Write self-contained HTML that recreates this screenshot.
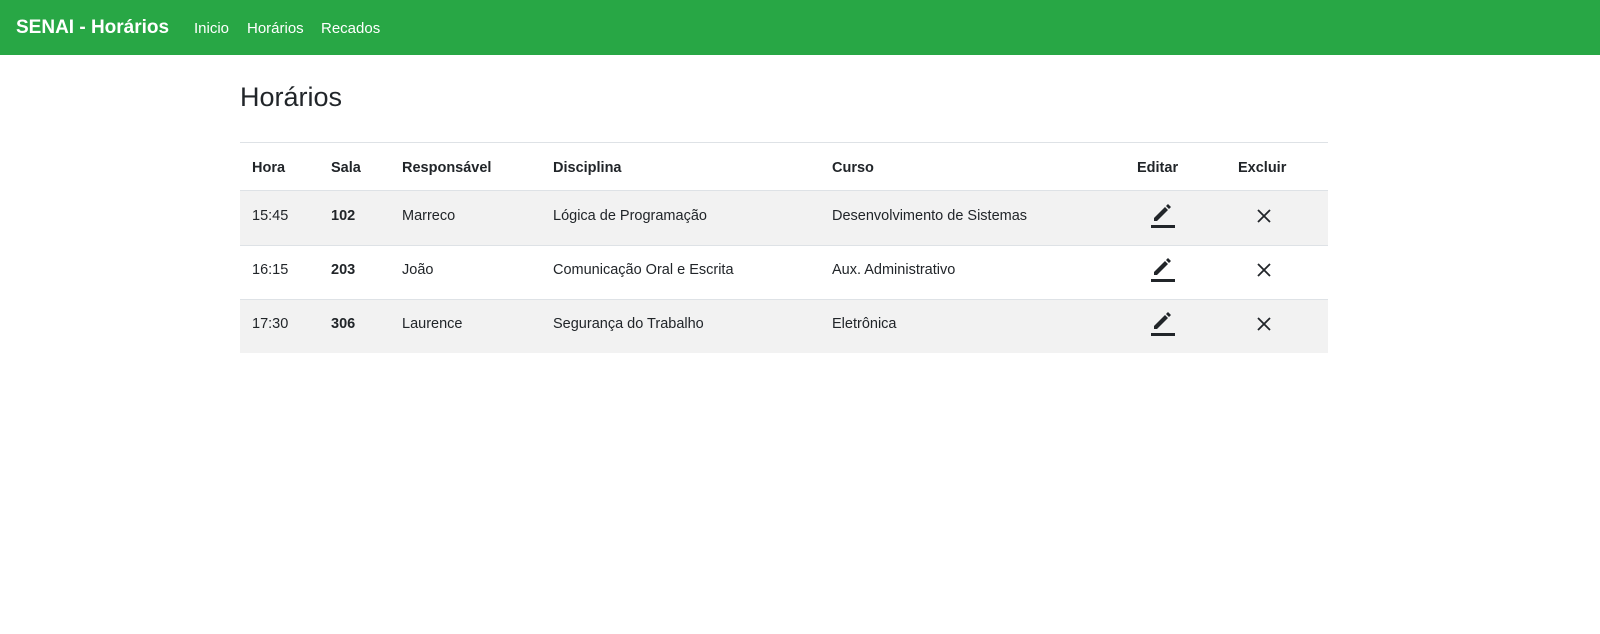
<!DOCTYPE html>
<html><head><meta charset="utf-8"><style>
body{margin:0;width:1600px;height:634px;background:#fff;font-family:"Liberation Sans",sans-serif;color:#212529;position:relative;overflow:hidden}
.nav{position:absolute;left:0;top:0;width:1600px;height:55px;background:#28a745}
.nav span{position:absolute;top:20px;color:#fff;font-size:15px;white-space:nowrap}
.brand{left:16px;top:17px!important;font-size:19px!important;font-weight:bold}
h1{position:absolute;left:240px;top:82px;margin:0;font-size:27px;font-weight:normal}
.row{position:absolute;left:240px;width:1088px}
.c{position:absolute;font-size:14.5px;white-space:nowrap}
.b{font-weight:bold}
.hdr .c{font-weight:bold}
</style></head><body>
<div class="nav"><span class="brand">SENAI - Horários</span><span style="left:194px">Inicio</span><span style="left:247px">Horários</span><span style="left:321px">Recados</span></div>
<h1>Horários</h1>
<div class="row hdr" style="top:142px;height:47px;border-top:1px solid #dee2e6;border-bottom:2px solid #dee2e6">
<span class="c" style="left:12px;top:17px">Hora</span><span class="c" style="left:91px;top:17px">Sala</span><span class="c" style="left:162px;top:17px">Responsável</span><span class="c" style="left:313px;top:17px">Disciplina</span><span class="c" style="left:592px;top:17px">Curso</span><span class="c" style="left:897px;top:17px">Editar</span><span class="c" style="left:998px;top:17px">Excluir</span></div>

<div class="row" style="top:191px;height:54px;background:#f2f2f2;border-bottom:1px solid #dee2e6">
<span class="c" style="left:12px;top:17px">15:45</span><span class="c b" style="left:91px;top:17px">102</span><span class="c" style="left:162px;top:17px">Marreco</span><span class="c" style="left:313px;top:17px">Lógica de Programação</span><span class="c" style="left:592px;top:17px">Desenvolvimento de Sistemas</span>
<svg style="position:absolute;left:910px;top:11px" width="26" height="26" viewBox="0 0 26 26"><path d="M4 16 L15 5 L18 8 L7 19 L4 19Z M16 4 L18 2 L21 5 L19 7Z" fill="#212529"/><rect x="1" y="23" width="24" height="3" fill="#212529"/></svg>
<svg style="position:absolute;left:1016px;top:17px" width="16" height="16"><path d="M2 2L14 14M14 2L2 14" stroke="#212529" stroke-width="1.8"/></svg></div>

<div class="row" style="top:246px;height:53px;background:#fff;border-bottom:1px solid #dee2e6">
<span class="c" style="left:12px;top:16px">16:15</span><span class="c b" style="left:91px;top:16px">203</span><span class="c" style="left:162px;top:16px">João</span><span class="c" style="left:313px;top:16px">Comunicação Oral e Escrita</span><span class="c" style="left:592px;top:16px">Aux. Administrativo</span>
<svg style="position:absolute;left:910px;top:10px" width="26" height="26" viewBox="0 0 26 26"><path d="M4 16 L15 5 L18 8 L7 19 L4 19Z M16 4 L18 2 L21 5 L19 7Z" fill="#212529"/><rect x="1" y="23" width="24" height="3" fill="#212529"/></svg>
<svg style="position:absolute;left:1016px;top:16px" width="16" height="16"><path d="M2 2L14 14M14 2L2 14" stroke="#212529" stroke-width="1.8"/></svg></div>

<div class="row" style="top:300px;height:53px;background:#f2f2f2">
<span class="c" style="left:12px;top:16px">17:30</span><span class="c b" style="left:91px;top:16px">306</span><span class="c" style="left:162px;top:16px">Laurence</span><span class="c" style="left:313px;top:16px">Segurança do Trabalho</span><span class="c" style="left:592px;top:16px">Eletrônica</span>
<svg style="position:absolute;left:910px;top:10px" width="26" height="26" viewBox="0 0 26 26"><path d="M4 16 L15 5 L18 8 L7 19 L4 19Z M16 4 L18 2 L21 5 L19 7Z" fill="#212529"/><rect x="1" y="23" width="24" height="3" fill="#212529"/></svg>
<svg style="position:absolute;left:1016px;top:16px" width="16" height="16"><path d="M2 2L14 14M14 2L2 14" stroke="#212529" stroke-width="1.8"/></svg></div>
</body></html>
